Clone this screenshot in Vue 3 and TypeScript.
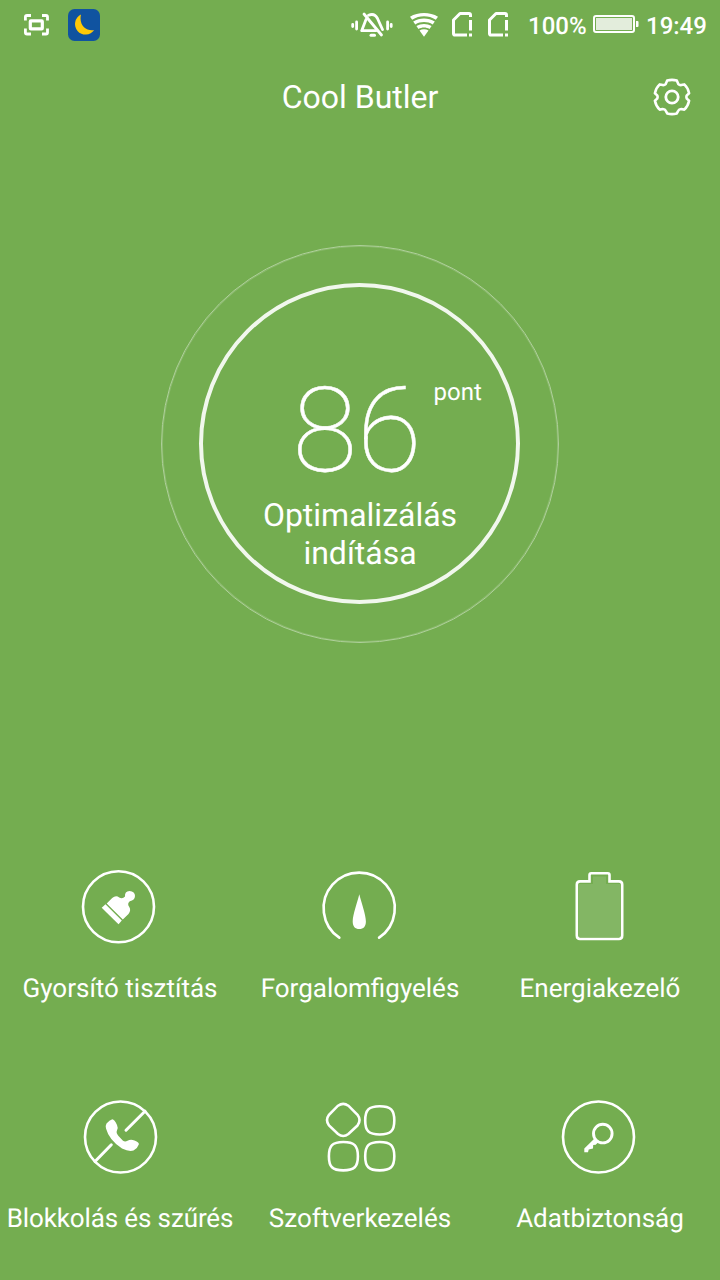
<script setup lang="ts">
type IconName = 'brush' | 'gauge' | 'battery' | 'block' | 'apps' | 'key'

interface Tool {
  icon: IconName
  label: string
}

const score = 86

const tools: Tool[] = [
  { icon: 'brush', label: 'Gyorsító tisztítás' },
  { icon: 'gauge', label: 'Forgalomfigyelés' },
  { icon: 'battery', label: 'Energiakezelő' },
  { icon: 'block', label: 'Blokkolás és szűrés' },
  { icon: 'apps', label: 'Szoftverkezelés' },
  { icon: 'key', label: 'Adatbiztonság' },
]
</script>

<template>
  <main class="screen">
    <header class="status">
      <svg class="capture" viewBox="0 0 26 22" fill="none" stroke="#fff" stroke-width="2.8">
        <path d="M1.400 6.500V3Q1.400 1.500 3 1.500H7M18 1.500h4Q23.500 1.500 23.500 3V6.500M1.400 14.500v4Q1.400 20 3 20H7M18 20h4Q23.500 20 23.500 18.500v-4" />
        <rect x="6.300" y="6.800" width="12" height="8" rx=".6" stroke-width="3.200" />
      </svg>
      <svg class="moon" viewBox="0 0 32 32">
        <rect width="32" height="32" rx="6.500" fill="#1053a0" />
        <path d="M13 5.600A10.500 10.500 0 1 0 26.200 21C18.500 22.500 10.500 16 13 5.600Z" fill="#ffc907" />
      </svg>
      <div class="indicators">
        <svg class="mute" viewBox="0 0 42 26" fill="none" stroke="#fff" stroke-width="2.800" stroke-linecap="round">
          <path d="M1.700 12.500v2M5.600 10v7M36.600 10v7M40.200 12.500v2" />
          <path d="M15 7.500 10.700 18.700H25M17.500 3.300Q23.500 .8 26.500 6.500L31.500 17.500" stroke-width="2.800" stroke-linejoin="round" />
          <path d="M13 2 30.500 23" stroke-width="2.800" />
          <path d="M20 23.300h3.500" stroke-width="3" />
        </svg>
        <svg class="wifi" viewBox="0 0 28 24">
          <path d="M0 3.800C8-1.200 20-1.200 28 3.800L25.800 6.800C18.500 2.200 9.500 2.200 2.200 6.800Z" fill="#fff" />
          <path d="M3.200 8.500c6.500-4 15.100-4 21.600 0L22.700 11.400c-5.200-3.200-12.200-3.200-17.400 0Z" fill="#fff" />
          <path d="M6.400 13c4.600-2.800 10.600-2.800 15.200 0L19.500 15.900c-3.300-2-7.700-2-11 0Z" fill="#fff" />
          <path d="M9.500 17.400c2.700-1.500 6.300-1.500 9 0L14 23.800Z" fill="#fff" />
        </svg>
        <svg v-for="n in 2" :key="n" class="sim" viewBox="0 0 22 25" fill="none" stroke="#fff" stroke-width="3">
          <path d="M18.500 5V3q0-1.500-1.500-1.500H8L1.500 8V21.500q0 1.600 1.600 1.600H15" stroke-linejoin="round" />
          <path d="M18.500 8V18.500M18.500 21.400V24.600" />
        </svg>
        <span class="percent">100%</span>
        <svg class="charge" viewBox="0 0 46 18">
          <rect x="1" y="1" width="40" height="16" rx="2" fill="none" stroke="#fff" stroke-width="2" />
          <rect x="3" y="3" width="36" height="12" fill="#e3eddc" />
          <path d="M43 6h1.500q1 0 1 1v4q0 1-1 1H43Z" fill="#fff" />
        </svg>
        <time class="clock">19:49</time>
      </div>
    </header>

    <div class="titlebar">
      <h1>Cool Butler</h1>
      <button class="settings" aria-label="Beállítások">
        <svg viewBox="0 0 38 38" fill="none" stroke="#fff" stroke-width="2.600" stroke-linejoin="round">
          <path d="M14.200 2.600Q19 1.200 23.800 2.600L25.300 6.100Q27 7.800 29.400 6.800L31.300 6.400Q35 9.800 36.100 15.300L33.800 17.400Q33 19 33.800 20.600L36.100 22.700Q35 28.200 31.300 31.600L28.200 31Q26 31 25.200 32.800L23.800 35.400Q19 36.800 14.200 35.400L12.800 32.800Q12 31 9.800 31L6.700 31.600Q3 28.200 1.900 22.700L4.200 20.600Q5 19 4.200 17.400L1.900 15.300Q3 9.800 6.700 6.400L8.600 6.800Q11 7.800 12.700 6.100Z" />
          <circle cx="19" cy="19" r="6.200" stroke-width="2.800" />
        </svg>
      </button>
    </div>

    <section class="hero">
      <div class="halo">
        <button class="dial">
          <span class="score">{{ score }}</span>
          <span class="unit">pont</span>
          <span class="action">Optimalizálás<br />indítása</span>
        </button>
      </div>
    </section>

    <nav class="tools">
      <button v-for="tool in tools" :key="tool.icon" class="tool">
        <svg class="tool-icon" viewBox="0 0 120 110" fill="none" stroke="#fff" stroke-width="2.600">
          <template v-if="tool.icon === 'brush'">
            <circle cx="58.500" cy="56.800" r="35.500" />
            <g fill="#fff" stroke="none">
              <path d="M46.700 53.500 52.200 48Q56 44.800 59.200 47.500Q62.500 49.500 65 46.500Q64.500 41.200 69.500 41Q75 41.300 75 46Q74.800 50.500 69.800 51.200Q67 53.700 69 56.500Q71.500 60 68.500 64L62.800 69.500Z" />
              <path d="M41.700 57.700 45.500 54.300 61.800 70.500 58.500 74.300Z" />
            </g>
          </template>
          <template v-else-if="tool.icon === 'gauge'">
            <path d="M39.300 87.700A35.600 35.600 0 1 1 79.100 87.700" stroke-linecap="round" />
            <path d="M59.300 44.300C61.500 53 65.900 65 65.900 71.500C65.900 76.500 63.500 79 59.300 79S52.700 76.500 52.700 71.500C52.700 65 57.100 53 59.300 44.300Z" fill="#fff" stroke="none" />
          </template>
          <template v-else-if="tool.icon === 'battery'">
            <path d="M40 31.400h9.500V25q0-1.700 1.700-1.700h16.600q1.700 0 1.700 1.700v6.400H79q3.200 0 3.200 3.200v51q0 3.400-3.200 3.400H40q-3.200 0-3.200-3.400v-51q0-3.200 3.200-3.200Z" />
            <path d="M53 26.500h13V34h14v53H39V34h14Z" fill="#83b664" stroke="none" />
          </template>
          <template v-else-if="tool.icon === 'block'">
            <circle cx="60.500" cy="57" r="35.500" />
            <path d="M35 81.500 51.300 64.800M66 50.200 85 31.200" stroke-width="3" stroke-linecap="round" />
            <path d="M46.500 43.500Q49.500 40.300 52.300 39.300Q54.500 39.500 57 45Q58.500 47.500 56.800 51Q56 53 58.500 56L63 60.700Q65 62 67.500 60.800Q70.500 59 74.500 60.500Q79.500 62.500 78.800 64.500Q77.500 68.500 73.500 70.500Q69 72 62 68.500Q49 60 46 48.500Q45.300 45.500 46.500 43.500Z" fill="#fff" stroke="none" />
          </template>
          <template v-else-if="tool.icon === 'apps'">
            <path d="M38 25.700Q43.200 22 48.400 25.700L57.500 34.800Q61.600 40.200 57.500 45.500L48.400 54Q43.200 58 38 54L29 45.500Q25 40.200 29 34.800Z" />
            <path d="M79.700 26.200C90.700 26.200 94.300 29.800 94.300 40.400S90.700 54.500 79.700 54.500 65.200 51 65.200 40.400 68.700 26.200 79.700 26.200Z" />
            <path d="M43.300 62C54.300 62 57.900 65.600 57.900 76.200S54.300 90.400 43.300 90.400 28.900 86.800 28.900 76.200 32.300 62 43.300 62Z" />
            <path d="M79.700 62C90.700 62 94.300 65.600 94.300 76.200S90.700 90.400 79.700 90.400 65.200 86.800 65.200 76.200 68.700 62 79.700 62Z" />
          </template>
          <template v-else>
            <circle cx="58.500" cy="57" r="35.500" />
            <circle cx="62.800" cy="53.600" r="9.300" stroke-width="2.900" />
            <path d="M54.500 58.500 58.200 62.200 55.700 64.800 53.200 65 53 68.500 48.700 69.500 48 72.200H44.300V68.500Z" fill="#fff" stroke="none" />
          </template>
        </svg>
        <span class="tool-label" :class="{ long: tool.label.length > 18 }">{{ tool.label }}</span>
      </button>
    </nav>
  </main>
</template>

<style>
body {
  margin: 0;
  background: #74ad50;
}
</style>

<style scoped>
.screen {
  width: 720px;
  height: 1280px;
  display: grid;
  grid-template-rows: 50px 94px 706px 430px;
  overflow: hidden;
  background: #74ad50;
  color: #fff;
  font-family: Roboto, "Liberation Sans", sans-serif;
  text-rendering: geometricPrecision;
}

button {
  padding: 0;
  border: 0;
  background: none;
  color: inherit;
  font: inherit;
  text-rendering: inherit;
}

svg {
  display: block;
  flex: none;
}

.status {
  box-sizing: border-box;
  padding: 0 12px 0 24px;
  display: flex;
  align-items: center;
}

.capture {
  width: 26px;
  height: 22px;
}

.moon {
  width: 32px;
  height: 32px;
  margin-left: 18px;
}

.indicators {
  display: flex;
  align-items: center;
  margin-left: 251px;
}

.mute {
  width: 42px;
  height: 26px;
}

.wifi {
  width: 28px;
  height: 24px;
  margin-left: 17px;
}

.sim {
  width: 22px;
  height: 25px;
  margin-left: 14px;
  margin-bottom: 2px;
}

.percent {
  width: 60px;
  margin-left: 18px;
  font-size: 24px;
  font-weight: 500;
  line-height: 50px;
  padding-top: 1px;
}

.charge {
  width: 46px;
  height: 18px;
  margin-left: 5px;
  margin-bottom: 2px;
}

.clock {
  margin-left: 7px;
  font-size: 24px;
  font-weight: 500;
  line-height: 50px;
  padding-top: 1px;
}

.titlebar {
  display: grid;
  grid-template-columns: 1fr auto 1fr;
  align-items: center;
}

.titlebar h1 {
  grid-column: 2;
  margin: 0;
  font-size: 32px;
  font-weight: 400;
  line-height: 38px;
}

.settings {
  justify-self: end;
  margin-right: 29px;
}

.settings svg {
  width: 38px;
  height: 38px;
}

.hero {
  display: flex;
  justify-content: center;
  align-items: flex-start;
}

.halo {
  width: 398px;
  height: 398px;
  box-sizing: border-box;
  margin-top: 101px;
  padding: 0 2px 2px 0;
  border: 1px solid #afd09b;
  box-shadow: inset 0 0 0 1px rgba(255, 255, 255, 0.16);
  border-radius: 50%;
  display: grid;
  place-items: center;
}

.dial {
  width: 321px;
  height: 321px;
  box-sizing: border-box;
  border: 4px solid #f1f7ed;
  border-radius: 50%;
  position: relative;
  display: flex;
  flex-direction: column;
  align-items: center;
}

.score {
  margin-top: 74px;
  margin-right: 4px;
  font-size: 118px;
  font-weight: 100;
  line-height: 140px;
  -webkit-text-stroke: 0.5px #fff;
}

.unit {
  position: absolute;
  left: 231px;
  top: 91px;
  font-size: 24px;
  line-height: 28px;
}

.action {
  margin-top: -5px;
  margin-left: 2px;
  font-size: 32px;
  line-height: 38px;
}

.tools {
  display: grid;
  grid-template-columns: repeat(3, 240px);
  grid-template-rows: 230px 200px;
}

.tool {
  display: flex;
  flex-direction: column;
  align-items: center;
  justify-content: flex-start;
}

.tool-icon {
  width: 120px;
  height: 110px;
}

.tool-label {
  margin-top: 14px;
  font-size: 26px;
  line-height: 30px;
  white-space: nowrap;
}

.tool-label.long {
  letter-spacing: -0.12px;
}
</style>
